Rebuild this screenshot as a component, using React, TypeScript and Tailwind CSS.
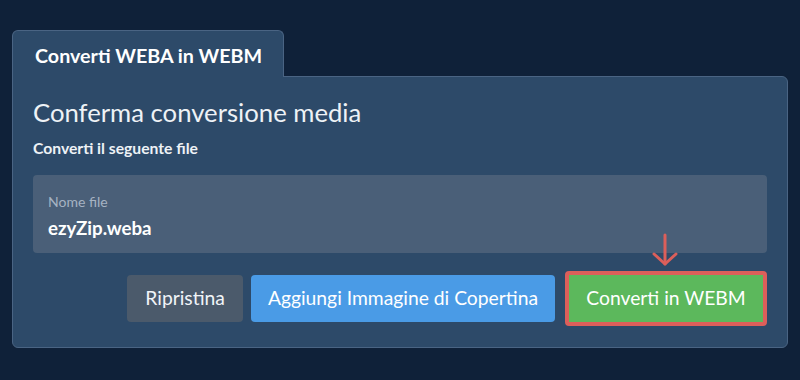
import * as React from "react";

export default function App() {
  return (
    <div className="h-[380px] w-[800px] bg-[#0f2139] pl-3 pr-3 pt-[30px] font-['Lato','Liberation_Sans',sans-serif]">
      <div className="flex">
        <div className="relative z-10 -mb-px flex h-[47px] w-[272px] items-center rounded-t-md border border-b-0 border-[#4a6483] bg-[#2d4a69] pl-[22px]">
          <span className="pt-[3px] text-[19.7px] font-bold text-white">Converti WEBA in WEBM</span>
        </div>
      </div>
      <div className="h-[272px] w-[776px] rounded-b-md rounded-tr-md border border-[#4a6483] bg-[#2d4a69] px-5">
        <h2 className="mt-[15px] text-[25.7px] leading-[40px] text-[#eef2f6]">Conferma conversione media</h2>
        <p className="mt-[6px] text-[15.7px] font-bold leading-[20px] text-[#eef2f6]">Converti il seguente file</p>
        <div className="mt-[17px] h-[78px] rounded bg-[#4a5f78] px-[15px] pt-[18px]">
          <div className="text-[14px] leading-[18px] text-[#a6b3c3]">Nome file</div>
          <div className="mt-[5px] text-[18.7px] font-bold leading-[24px] text-white">ezyZip.weba</div>
        </div>
        <div className="mt-[18px] flex items-center justify-end">
          <button className="h-[47px] rounded bg-[#4b5a6b] px-[18px] text-[19.3px] text-[#f1f4f8]">Ripristina</button>
          <button className="ml-2 h-[47px] rounded bg-[#4a9be6] px-[17px] text-[19.3px] text-white">Aggiungi Immagine di Copertina</button>
          <div className="relative ml-[10px]">
            <svg className="absolute left-[85px] top-[-38px]" width="30" height="34" viewBox="0 0 30 34" fill="none" stroke="#dc5f5a" strokeWidth="3" strokeLinecap="round">
              <path d="M15 2 V31" />
              <path d="M4 21 L15 31 L26 21" strokeLinejoin="round" />
            </svg>
            <button className="h-[55px] w-[202px] rounded border-4 border-[#dc5f5a] bg-[#5cb85c] text-[19.3px] text-white">Converti in WEBM</button>
          </div>
        </div>
      </div>
    </div>
  );
}
